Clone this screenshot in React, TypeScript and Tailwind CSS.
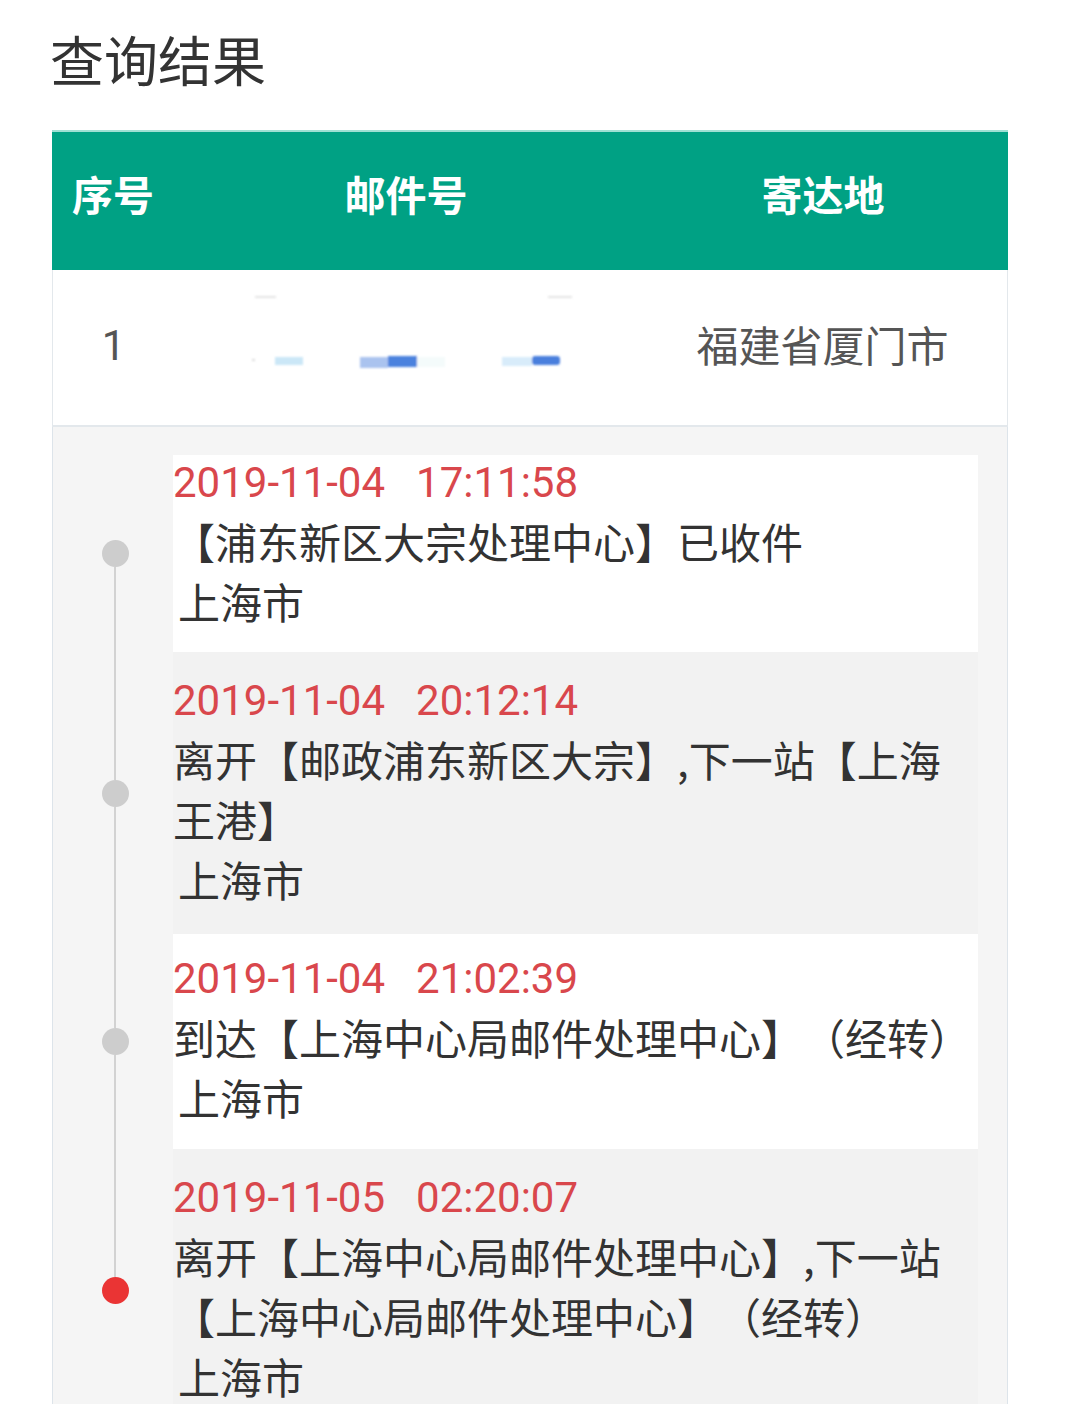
import React from "react";

const CJK = "font-['Noto_Sans_CJK_SC','Noto_Sans',sans-serif]";

type Item = {
  date: string;
  time: string;
  lines: string[];
  city: string;
  white: boolean;
  pad: string;
  last?: boolean;
  first?: boolean;
};

const items: Item[] = [
  {
    date: "2019-11-04",
    time: "17:11:58",
    lines: ["【浦东新区大宗处理中心】已收件"],
    city: "上海市",
    white: true,
    pad: "pt-0 pb-[21px]",
    first: true,
  },
  {
    date: "2019-11-04",
    time: "20:12:14",
    lines: ["离开【邮政浦东新区大宗】,下一站【上海", "王港】"],
    city: "上海市",
    white: false,
    pad: "pt-[21px] pb-[25px]",
  },
  {
    date: "2019-11-04",
    time: "21:02:39",
    lines: ["到达【上海中心局邮件处理中心】（经转）"],
    city: "上海市",
    white: true,
    pad: "pt-[17px] pb-[22px]",
  },
  {
    date: "2019-11-05",
    time: "02:20:07",
    lines: ["离开【上海中心局邮件处理中心】,下一站", "【上海中心局邮件处理中心】（经转）"],
    city: "上海市",
    white: false,
    pad: "pt-[21px] pb-[25px]",
    last: true,
  },
];

function TimelineRow({ item }: { item: Item }) {
  return (
    <div className="flex">
      <div className="w-[120px] flex flex-col pl-[49px] shrink-0">
        <div className={`w-[2px] flex-1 ml-[12px] ${item.first ? "" : "bg-[#d2d2d2]"}`} />
        <div
          className={`w-[27px] h-[27px] rounded-full ${item.last ? "bg-[#ea3434]" : "bg-[#cdcdcd]"}`}
        />
        <div className={`w-[2px] flex-1 ml-[12px] ${item.last ? "" : "bg-[#d2d2d2]"}`} />
      </div>
      <div className={`w-[805px] ${item.white ? "bg-white" : "bg-[#f2f2f2]"} ${item.pad}`}>
        <div className="font-['Roboto','Noto_Sans',sans-serif] text-[42px] leading-[56px] text-[#d9474c] whitespace-nowrap">
          <span>{item.date}</span>
          <span className="ml-[31px]">{item.time}</span>
        </div>
        {item.lines.map((l, i) => (
          <div
            key={i}
            className={`${CJK} text-[42px] leading-[60px] text-[#333] whitespace-nowrap [text-spacing-trim:space-all]`}
          >
            {l}
          </div>
        ))}
        <div className={`${CJK} text-[42px] leading-[60px] text-[#333] pl-[5px] whitespace-nowrap`}>
          {item.city}
        </div>
      </div>
    </div>
  );
}

export default function App() {
  return (
    <div className={`w-[1071px] h-[1404px] overflow-hidden bg-white ${CJK}`}>
      <h1 className="pl-[50px] pt-[26px] text-[54px] leading-[66px] text-[#333] font-normal">
        查询结果
      </h1>
      <div className="ml-[52px] mt-[38px] w-[956px]">
        <div className="grid grid-cols-[122px_464px_370px] h-[140px] pb-[14px] bg-[#00a184] items-center text-white font-bold text-[41px] border-t-2 border-[#9fe0d4]">
          <div className="text-center">序号</div>
          <div className="text-center">邮件号</div>
          <div className="text-center">寄达地</div>
        </div>
        <div className="grid grid-cols-[121px_464px_369px] h-[157px] bg-white items-center border-x border-b-2 border-[#e3e8ec] text-[42px] text-[#555]">
          <div className="text-center font-['Roboto',sans-serif] pb-[4px]">1</div>
          <div className="h-full">
            <svg width="464" height="155" viewBox="0 0 464 155">
              <defs>
                <filter id="b">
                  <feGaussianBlur stdDeviation="0.8" />
                </filter>
              </defs>
              <g filter="url(#b)">
                <rect x="81" y="26" width="21" height="2" fill="#e4e4e4" />
                <rect x="374" y="26" width="24" height="2" fill="#e4e4e4" />
                <rect x="78" y="89" width="3" height="2" fill="#dddddd" />
                <rect x="101" y="87" width="28" height="8" fill="#cbe7f7" />
                <rect x="186" y="87" width="28" height="11" fill="#aac3ef" />
                <rect x="214" y="86" width="29" height="11" fill="#4c82de" />
                <rect x="243" y="87" width="28" height="10" fill="#f4fbfb" />
                <rect x="328" y="87" width="30" height="9" fill="#d8ecfa" />
                <rect x="358" y="86" width="28" height="9" rx="3" fill="#4a7fdd" />
              </g>
            </svg>
          </div>
          <div className="text-center pb-[8px]">福建省厦门市</div>
        </div>
        <div className="bg-[#f5f5f5] border-x border-[#dde4ea] h-[980px] pt-[28px]">
          {items.map((it, i) => (
            <TimelineRow key={i} item={it} />
          ))}
        </div>
      </div>
    </div>
  );
}
